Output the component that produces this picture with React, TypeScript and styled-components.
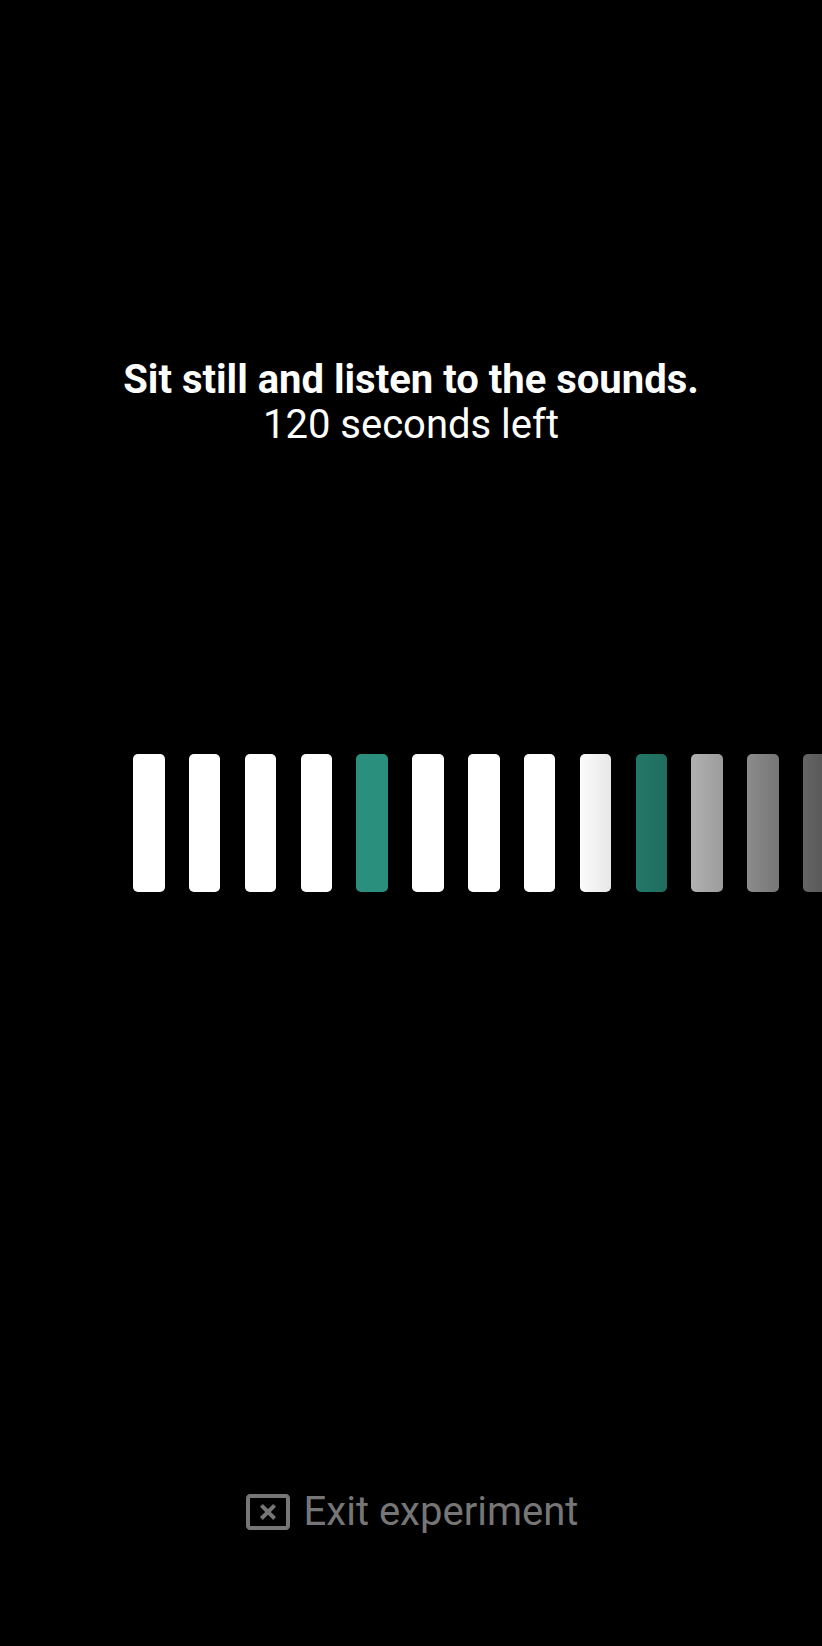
import React from "react";
import styled, { createGlobalStyle } from "styled-components";

const GlobalStyle = createGlobalStyle`
  html, body {
    margin: 0;
    padding: 0;
    background: #000;
  }
  body {
    font-family: Roboto, "Noto Sans", sans-serif;
    overflow: hidden;
  }
`;

const Page = styled.div`
  width: 822px;
  height: 1646px;
  background: #000;
  display: flex;
  flex-direction: column;
  overflow: hidden;
`;

const Prompt = styled.div`
  margin-top: 357px;
  text-align: center;
  color: #fff;
  font-size: 40px;
  line-height: 45px;
`;

const Title = styled.div`
  font-weight: 700;
`;

const Countdown = styled.div`
  font-weight: 400;
`;

const Strip = styled.div`
  margin-top: 307px;
  display: flex;
  gap: 24.35px;
  padding-left: 133px;
  overflow: hidden;
  -webkit-mask-image: linear-gradient(to right, #000 575px, rgba(0, 0, 0, 0.35) 822px);
  mask-image: linear-gradient(to right, #000 575px, rgba(0, 0, 0, 0.35) 822px);
`;

const Bar = styled.div<{ $accent?: boolean }>`
  flex: 0 0 31.5px;
  height: 138px;
  border-radius: 5px;
  background: ${(p) => (p.$accent ? "#2a8f7d" : "#ffffff")};
`;

const ExitButton = styled.button`
  margin-top: 596px;
  align-self: center;
  display: flex;
  align-items: center;
  gap: 12px;
  background: none;
  border: none;
  padding: 0;
  cursor: pointer;
  color: #767676;
  font-family: Roboto, "Noto Sans", sans-serif;
  font-size: 40px;
  line-height: 48px;
`;

const ExitIcon = styled.svg`
  width: 48px;
  height: 48px;
  flex: 0 0 48px;
  fill: currentColor;
`;

const bars = [false, false, false, false, true, false, false, false, false, true, false, false, false, false];

export default function App() {
  return (
    <>
      <GlobalStyle />
      <Page>
        <Prompt>
          <Title>Sit still and listen to the sounds.</Title>
          <Countdown>120 seconds left</Countdown>
        </Prompt>
        <Strip>
          {bars.map((accent, i) => (
            <Bar key={i} $accent={accent} />
          ))}
        </Strip>
        <ExitButton type="button">
          <ExitIcon viewBox="0 0 24 24" aria-hidden="true">
            <path d="M21 3H3c-1.1 0-2 .9-2 2v14c0 1.1.9 2 2 2h18c1.1 0 2-.9 2-2V5c0-1.1-.9-2-2-2zm0 16H3V5h18v14zM9.41 15.95L12 13.36l2.59 2.59L16 14.54l-2.59-2.59L16 9.36l-1.41-1.41L12 10.54 9.41 7.95 8 9.36l2.59 2.59L8 14.54z" />
          </ExitIcon>
          Exit experiment
        </ExitButton>
      </Page>
    </>
  );
}
